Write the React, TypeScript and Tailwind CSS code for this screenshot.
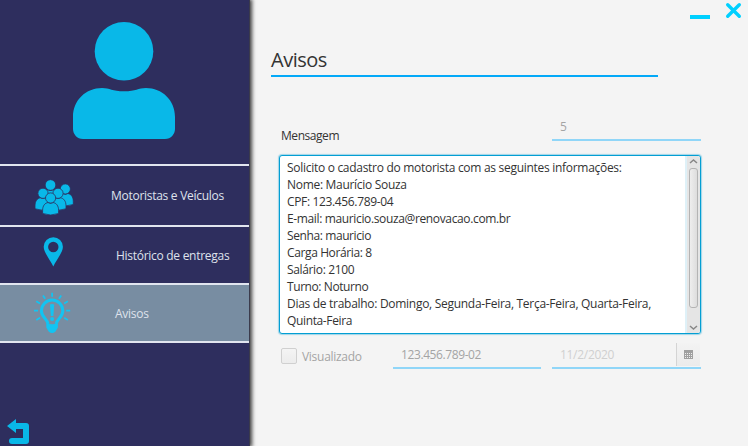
import React from "react";

const message = [
  { text: "Solicito o cadastro do motorista com as seguintes informações:", cls: "tracking-[-0.29px]" },
  { text: "Nome: Maurício Souza", cls: "tracking-[-0.3px]" },
  { text: "CPF: 123.456.789-04", cls: "tracking-[-0.35px]" },
  { text: "E-mail: mauricio.souza@renovacao.com.br", cls: "tracking-[-0.36px]" },
  { text: "Senha: mauricio", cls: "tracking-[-0.4px]" },
  { text: "Carga Horária: 8", cls: "tracking-[-0.38px]" },
  { text: "Salário: 2100", cls: "tracking-[-0.35px]" },
  { text: "Turno: Noturno", cls: "tracking-[-0.42px]" },
  { text: "Dias de trabalho: Domingo, Segunda-Feira, Terça-Feira, Quarta-Feira,", cls: "tracking-[-0.29px]" },
  { text: "Quinta-Feira", cls: "tracking-[-0.36px]" },
];

function UserIcon() {
  return (
    <svg className="mt-[22px] ml-[73px] h-[118px] w-[102px]" viewBox="73 22 102 118" fill="#09b8e8">
      <circle cx="124" cy="51.3" r="29.3" />
      <path d="M73 117C73 100 86 88 102 88C110 88 112 91.3 124 91.3S138 88 146 88C162 88 175 100 175 117V129C175 134 171 139 165 139H83C77 139 73 134 73 129Z" />
    </svg>
  );
}

function Person({ x, y, s = 1 }: { x: number; y: number; s?: number }) {
  return (
    <g transform={`translate(${x} ${y}) scale(${s})`} stroke="#2e2e5e" strokeWidth="0.8">
      <path d="M-8 15.5V12.5C-8 7.5-5.5 5-2.5 4.5Q0 6 2.5 4.5C5.5 5 8 7.5 8 12.5V15.5Q0 18.5-8 15.5Z" />
      <circle r="5.1" />
    </g>
  );
}

function GroupIcon() {
  return (
    <svg className="ml-[35px] h-[38px] w-[39px] shrink-0" viewBox="35 177 39 38" fill="#09b8e8">
      <Person x={65.3} y={189} />
      <Person x={50.5} y={185} s={1.05} />
      <Person x={43} y={193.3} />
      <Person x={58} y={193.3} />
      <Person x={50.6} y={198} />
    </svg>
  );
}

function PinIcon() {
  return (
    <svg className="ml-[43px] h-[30px] w-[20px] shrink-0" viewBox="0 0 20 30" fill="#09b8e8" fillRule="evenodd">
      <path d="M10.3 29.5C7 22.5.7 15.5.7 9.8A9.6 9.6 0 0 1 19.9 9.8C19.9 15.5 13.5 22.5 10.3 29.5ZM10.3 4.8A5.2 5.2 0 1 0 10.3 15.2A5.2 5.2 0 1 0 10.3 4.8Z" />
    </svg>
  );
}

function BulbIcon() {
  return (
    <svg className="ml-[33px] h-[42px] w-[38px] shrink-0" viewBox="33 293 38 42" fill="none" stroke="#12c4f2">
      <path strokeWidth="3" d="M48 325C47.5 320 41.4 318.500 41.4 311.8A10.700 10.700 0 0 1 62.800 311.8C62.800 318.500 56.700 320 56.200 325" />
      <path fill="#12c4f2" stroke="none" d="M46.300 324.500Q52.100 326 57.900 324.500V328.500L55.500 332.500Q52.100 335.500 48.700 332.500L46.300 328.500Z" />
      <path fill="#12c4f2" stroke="none" d="M50 305.500Q52.100 304.500 54.200 305.500L53.400 317H50.800Z" />
      <circle cx="52.100" cy="320" r="2" fill="#12c4f2" stroke="none" />
      <path strokeWidth="1.800" d="M52.100 293.800v4M43 296.500l2.200 3.200M61.200 296.500l-2.200 3.200M36.300 302.300l3.700 2.200M67.900 302.300l-3.700 2.200M34 311.700h4M66.200 311.700h4M36.300 320.900l3.700-2.200M67.900 320.900l-3.700-2.200" />
    </svg>
  );
}

export default function App() {
  return (
    <div className="flex h-[446px] w-[748px] overflow-hidden bg-[#f4f4f4] font-['Open_Sans','Noto_Sans',sans-serif] text-[12px] text-[#333]">
      <aside className="flex w-[250px] shrink-0 flex-col border-r border-[#3b3b4c] bg-[#2e2e5e] text-[#dfe2ec] shadow-[1px_0_4px_1px_rgba(0,0,0,0.75)]">
        <div className="h-[164px]">
          <UserIcon />
        </div>
        <div className="flex h-[61px] items-center border-t-2 border-[#e1e5ef]">
          <GroupIcon />
          <span className="ml-[37px] whitespace-nowrap tracking-[-0.28px]">Motoristas e Veículos</span>
        </div>
        <div className="flex h-[58px] items-center border-t-2 border-[#e1e5ef]">
          <div className="-mt-[6px] flex">
            <PinIcon />
          </div>
          <span className="ml-[53px] pt-[2px] whitespace-nowrap tracking-[-0.28px]">Histórico de entregas</span>
        </div>
        <div className="flex h-[60px] items-center border-y-2 border-[#e1e5ef] bg-[#788da2]">
          <BulbIcon />
          <span className="ml-[44px] pt-[2px] tracking-[-0.25px]">Avisos</span>
        </div>
        <svg className="mt-auto mb-[2px] ml-[7px] h-[25px] w-[22px]" viewBox="0 0 22 25" fill="#09b8e8">
          <path d="M0 7L9 0V4H19Q22 4 22 7V22Q22 25 19 25H5Q2 25 2 22Q2 19 5 19H16V10H9V14Z" />
        </svg>
      </aside>

      <main className="flex flex-1 flex-col">
        <div className="flex h-[30px] justify-end pr-[6px]">
          <div className="mt-[15px] mr-[15px] h-[4px] w-[20px] bg-[#00d0ff]" />
          <svg className="mt-[2px] h-[17px] w-[17px]" viewBox="0 0 17 17" stroke="#00d0ff" strokeWidth="3.4" strokeLinecap="round">
            <path d="M2.700 2.700L14.300 14.300M14.300 2.700L2.700 14.300" />
          </svg>
        </div>
        <h1 className="ml-[21px] flex h-[47px] w-[387px] items-end border-b-2 border-[#03a9f8] pb-[2px] text-[20px] leading-[27px] tracking-[-0.5px]">
          Avisos
        </h1>
        <div className="ml-[29px] flex h-[78px] w-[422px] justify-between">
          <label className="mt-[50px] ml-[2px] leading-[17px] tracking-[-0.45px]">Mensagem</label>
          <div className="mt-[40px] h-[24px] w-[149px] border-b-2 border-[#90d6f8] pt-[1px] pl-[8px] leading-[17px] text-[#a4a4a4]">5</div>
        </div>
        <div className="ml-[29px] flex h-[179px] w-[422px] overflow-hidden rounded-[3px] border border-[#039ed3] bg-white shadow-[0_0_1px_1px_rgba(3,158,211,0.35)]">
          <div className="flex-1 pt-[3px] pl-[7px]">
            {message.map((line) => (
              <p key={line.text} className="h-[17px] leading-[17px] whitespace-nowrap">
                <span className={line.cls}>{line.text}</span>
              </p>
            ))}
          </div>
          <div className="flex w-[15px] flex-col items-center border-l-2 border-[#dff1f8] bg-[#e5e5e5]">
            <svg className="mt-[2px] h-[6px] w-[9px]" viewBox="0 0 9 6" fill="none" stroke="#888" strokeWidth="1.5">
              <path d="M1 5L4.5 2L8 5" />
            </svg>
            <div className="mt-[4px] h-[140px] w-[9px] rounded-[3px] border border-[#b4b4b4] bg-gradient-to-r from-[#eee] to-[#ddd]" />
            <svg className="mt-auto mb-[2px] h-[6px] w-[9px]" viewBox="0 0 9 6" fill="none" stroke="#888" strokeWidth="1.5">
              <path d="M1 1L4.5 4L8 1" />
            </svg>
          </div>
        </div>
        <div className="ml-[29px] flex h-[35px] w-[422px] leading-[17px] text-[#a4a4a4]">
          <div className="mt-[14px] ml-[2px] h-[16px] w-[16px] rounded-[2px] border border-[#d0d0d0] bg-gradient-to-b from-[#f4f4f4] to-[#ececec]" />
          <span className="mt-[14px] ml-[5px] w-[91px] tracking-[-0.28px]">Visualizado</span>
          <div className="h-[35px] w-[148px] border-b-2 border-[#90d6f8] pt-[12px] pl-[8px] tracking-[-0.4px]">123.456.789-02</div>
          <div className="ml-[11px] flex h-[35px] w-[149px] border-b-2 border-[#90d6f8] text-[#d0d0d0]">
            <span className="w-[124px] pt-[12px] pl-[8px] tracking-[-0.3px]">11/2/2020</span>
            <div className="mt-[9px] flex h-[23px] w-[24px] items-center justify-center border-l border-[#d4d4d4] bg-gradient-to-b from-[#f3f3f3] to-[#ebebeb]">
              <svg className="h-[9px] w-[9px]" viewBox="0 0 9 9" shapeRendering="crispEdges">
                <path fill="#a0a0a0" d="M0 0H9V9H0Z" />
                <path fill="#eee" d="M1 3h1v1h-1zM3 3h1v1h-1zM5 3h1v1h-1zM7 3h1v1h-1zM1 5h1v1h-1zM3 5h1v1h-1zM5 5h1v1h-1zM7 5h1v1h-1zM1 7h1v1h-1zM3 7h1v1h-1zM5 7h1v1h-1zM7 7h1v1h-1z" />
              </svg>
            </div>
          </div>
        </div>
      </main>
    </div>
  );
}
